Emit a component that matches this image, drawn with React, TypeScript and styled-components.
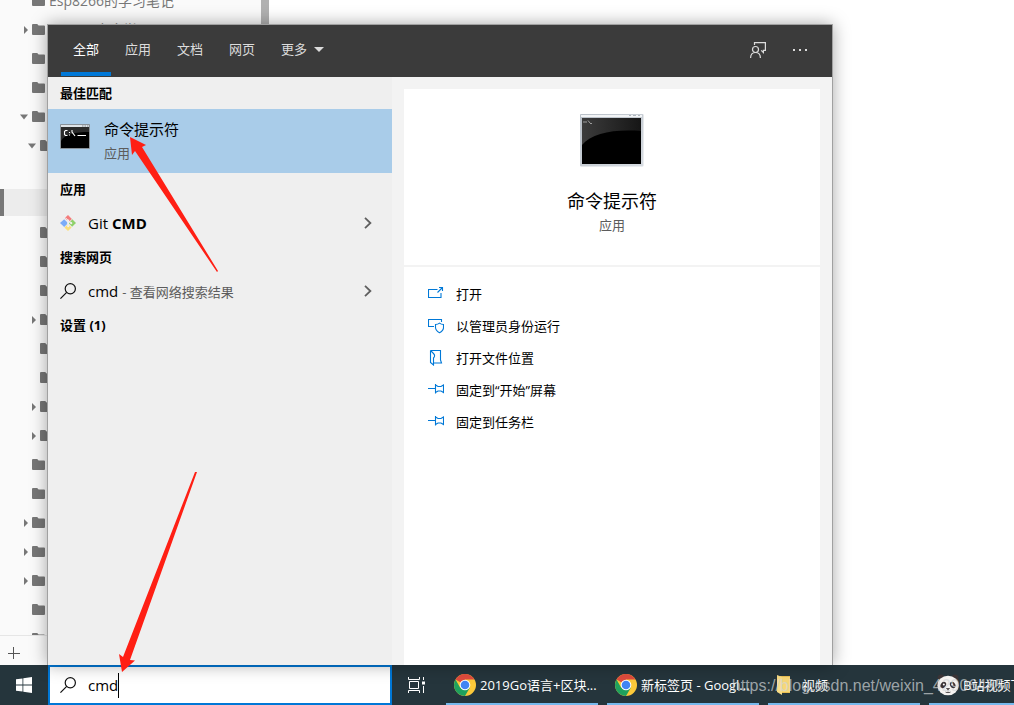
import React from 'react';
import styled, { createGlobalStyle } from 'styled-components';

const GlobalStyle = createGlobalStyle`
  *, *::before, *::after { box-sizing: border-box; }
  html, body { margin: 0; height: 100%; overflow: hidden; }
  #root { height: 100%; }
  body, button, input {
    font-family: "Open Sans", "Noto Sans CJK SC", sans-serif;
  }
  button { border: 0; padding: 0; background: none; color: inherit; text-align: left; }
  svg { display: block; flex: none; }
`;

const Desktop = styled.div`
  position: relative;
  display: flex;
  flex-direction: column;
  height: 100vh;
  overflow: hidden;
  background: #fff;
`;

const Workspace = styled.div`
  flex: 1;
  min-height: 0;
  display: flex;
`;

const Sidebar = styled.aside`
  flex: 0 0 261px;
  display: flex;
  flex-direction: column;
  background: #fafafa;
`;

const Scrollbar = styled.div`
  flex: 0 0 8px;
  background: #b1b1b1;
`;

const Tree = styled.ul`
  flex: 1;
  min-height: 0;
  margin: 0;
  padding: 0;
  list-style: none;
  overflow: hidden;
  display: flex;
  flex-direction: column;
  gap: 2px;

  & > li:first-child { margin-top: -14px; }
`;

const TreeRow = styled.li<{ $level: number; $selected?: boolean }>`
  flex: 0 0 27px;
  display: flex;
  align-items: center;
  gap: 4px;
  padding-top: 2px;
  padding-left: ${p => 12 + p.$level * 8}px;
  color: #777;
  font-size: 14px;
  line-height: 20px;
  white-space: nowrap;
  ${p => p.$selected && 'background: #ececec; border-left: 4px solid #777;'}
`;

const SidebarFooter = styled.div`
  flex: 0 0 30px;
  display: flex;
  align-items: center;
  padding: 4px 0 0 8px;
  border-top: 1px solid #e6e6e6;
`;

const SearchPanel = styled.section`
  position: absolute;
  z-index: 2;
  left: 47px;
  top: 24px;
  bottom: 40px;
  width: 786px;
  display: flex;
  flex-direction: column;
  border: 1px solid #a0a0a0;
  border-bottom: 0;
  box-shadow: 0 0 16px rgba(0, 0, 0, 0.35);
`;

const PanelHeader = styled.header`
  flex: 0 0 52px;
  display: flex;
  justify-content: space-between;
  padding: 0 24px 0 12px;
  background: #3b3b3b;
  color: #dcdcdc;
`;

const Tabs = styled.nav`
  display: flex;
`;

const Tab = styled.button<{ $active?: boolean }>`
  display: flex;
  align-items: center;
  gap: 7px;
  padding: 0 13px 4px;
  font-size: 13px;
  line-height: 20px;
  ${p => p.$active && `
    color: #fff;
    background: linear-gradient(#0078d7, #0078d7) center bottom 1px / 50px 4px no-repeat;
  `}
`;

const HeaderTools = styled.div`
  display: flex;
  align-items: center;
  gap: 26px;
  padding-bottom: 2px;
`;

const PanelBody = styled.div`
  flex: 1;
  min-height: 0;
  display: flex;
`;

const Results = styled.div`
  flex: 0 0 344px;
  background: #efefef;
  color: #000;
`;

const GroupTitle = styled.h2`
  margin: 0;
  padding: 0 12px;
  font-size: 13px;
  font-weight: 700;
  line-height: 32px;
`;

const BestMatch = styled.button`
  width: 100%;
  height: 64px;
  display: flex;
  align-items: center;
  gap: 14px;
  padding: 0 12px;
  background: #a9cce9;
`;

const BestThumb = styled.span`
  padding-bottom: 8px;
`;

const BestText = styled.span`
  display: flex;
  flex-direction: column;
  font-size: 15px;
  line-height: 24px;
`;

const Muted = styled.span`
  color: #5c5c5c;
  font-size: 13px;
`;

const ResultRow = styled.button`
  width: 100%;
  height: 36px;
  display: flex;
  align-items: center;
  gap: 12px;
  padding: 0 20px 0 12px;
  font-size: 15px;
  line-height: 24px;
`;

const ResultLabel = styled.span`
  flex: 1;
`;

const Preview = styled.div`
  flex: 1;
  display: flex;
  flex-direction: column;
  gap: 2px;
  padding: 12px 12px 0;
  background: #f3f3f3;
`;

const Hero = styled.div`
  flex: 0 0 176px;
  display: flex;
  flex-direction: column;
  align-items: center;
  padding-top: 25px;
  background: #fff;
`;

const HeroTitle = styled.h1`
  margin: 20px 0 0;
  font-size: 18px;
  font-weight: 400;
  line-height: 28px;
`;

const Actions = styled.div`
  flex: 1;
  padding: 11px 24px;
  background: #fff;
`;

const Action = styled.button`
  width: 100%;
  height: 32px;
  display: flex;
  align-items: center;
  gap: 12px;
  font-size: 13px;
  line-height: 20px;
  color: #000;
`;

const Taskbar = styled.footer`
  flex: 0 0 40px;
  display: flex;
  background: #25353c;
  color: #fff;
`;

const TaskButton = styled.button`
  flex: 0 0 48px;
  display: flex;
  align-items: center;
  justify-content: center;
`;

const SearchBox = styled.label`
  flex: 0 0 344px;
  display: flex;
  align-items: center;
  padding: 0 10px;
  border: 2px solid #0078d7;
  background: #fff;
`;

const SearchInput = styled.input`
  field-sizing: content;
  margin-left: 12px;
  padding: 0;
  border: 0;
  outline: 0;
  background: none;
  color: #000;
  caret-color: transparent;
  font-size: 15px;
  line-height: 24px;
`;

const Caret = styled.span`
  width: 1px;
  height: 25px;
  background: #000;
`;

const Apps = styled.div`
  flex: 1;
  min-width: 0;
  display: flex;
  gap: 9px;
  padding-left: 6px;
  overflow: hidden;
`;

const AppButton = styled.button`
  flex: 0 0 152px;
  display: flex;
  align-items: center;
  gap: 4px;
  padding: 2px 0 0 8px;
  border-bottom: 2px solid #76b9ed;
  font-size: 13px;
  line-height: 20px;
  white-space: nowrap;
  overflow: hidden;
`;

const Watermark = styled.span`
  position: absolute;
  z-index: 4;
  right: 10px;
  bottom: 8px;
  color: rgba(210, 214, 216, 0.7);
  font-family: "Liberation Sans", Arial, sans-serif;
  font-size: 16px;
  line-height: 22px;
`;

const Pointers = styled.svg`
  position: absolute;
  z-index: 3;
  left: 0;
  top: 0;
  pointer-events: none;
`;

const Twisty = ({ open }: { open?: boolean }) => (
  <svg width="8" height="10" viewBox="0 0 8 10" fill="#777">
    {open ? <path d="M0 2.5h8L4 7.5z" /> : <path d="M4 1l4 4-4 4z" />}
  </svg>
);

const Folder = () => (
  <svg width="13" height="11" viewBox="0 0 13 11" fill="#777">
    <path d="M1 0h4.2l1.4 1.6H12a1 1 0 0 1 1 1V10a1 1 0 0 1-1 1H1a1 1 0 0 1-1-1V1a1 1 0 0 1 1-1z" />
  </svg>
);

const Gap = styled.span`
  flex: 0 0 8px;
`;

const SearchIcon = () => (
  <svg width="16" height="16" viewBox="0 0 16 16" fill="none" stroke="#111" strokeWidth="1.2">
    <circle cx="10.3" cy="5.7" r="5.1" />
    <path d="M6.7 9.3L.4 15.6" />
  </svg>
);

const Chevron = () => (
  <svg width="8" height="12" viewBox="0 0 8 12" fill="none" stroke="#5f5f5f" strokeWidth="1.8">
    <path d="M1 .8L6.4 6 1 11.2" />
  </svg>
);

const GitIcon = () => (
  <svg width="16" height="16" viewBox="0 0 16 16">
    <path d="M8 0l3.9 3.9-3 3L8 6 4.9 3.1z" fill="#f47c7c" />
    <path d="M4.2 4.2L0 8l4.2 4 3-3V7.2z" fill="#7cacf8" />
    <path d="M12.3 4.3L16 8l-3.9 3.8L8.9 8.4z" fill="#8fd16a" />
    <path d="M8 9.2l3.6 3.2L8 16l-3.6-3.6z" fill="#fbdf7b" />
    <path d="M5.4 2.6L8.2 5.4M8.2 5.4v6M8.2 5.4l3 3" stroke="#efefef" strokeWidth="1" />
    <circle cx="8.2" cy="5.6" r="1.1" fill="#efefef" />
    <circle cx="8.2" cy="11.2" r="1.1" fill="#efefef" />
    <circle cx="11.2" cy="8.2" r="1.1" fill="#efefef" />
  </svg>
);

const ConsoleSmall = () => (
  <svg width="30" height="26" viewBox="0 0 30 26">
    <rect width="30" height="25" rx="1" fill="#8a9299" />
    <rect x="1" y="1" width="28" height="2" fill="#dfe4e8" />
    <path d="M22 2h1.5M24.5 2H26M27 2h1.5" stroke="#7f868c" />
    <rect x="1" y="3" width="28" height="21" fill="#000" />
    <path d="M1 3h28v5C15 8 5 10 1 17z" fill="#2b2b2b" />
    <path d="M7.5 6.500H5.500l-1 1v3l1 1h2M9.500 8v1M9.500 10.500v1M12 6v2l3 4M17.500 11.500H26" fill="none" stroke="#fff" strokeWidth="1.1" />
  </svg>
);

const ConsoleLarge = () => (
  <svg width="64" height="53" viewBox="0 0 64 53">
    <defs>
      <linearGradient id="frame" x1="0" y1="0" x2="1" y2="1">
        <stop offset="0" stopColor="#b9c0c8" />
        <stop offset="1" stopColor="#d7dce2" />
      </linearGradient>
      <linearGradient id="gloss" x1="0" y1="0" x2="1" y2="0">
        <stop offset="0" stopColor="#3c3c3c" />
        <stop offset="1" stopColor="#161616" />
      </linearGradient>
    </defs>
    <rect width="63.500" height="52.500" rx="1" fill="url(#frame)" />
    <rect x="1" y="1" width="61" height="2" fill="#f2f4f6" />
    <path d="M49 1.500h2M53 1.500h3M58 1.500h2" stroke="#aeb5bc" />
    <rect x="2" y="4" width="59" height="46" fill="#000" />
    <path d="M2 4h59v13C34 15 12 19 2 31z" fill="url(#gloss)" />
    <path d="M3 8h2M6 7v2M8 6.500l2 2.500M10 9.500h2" stroke="#a8a8a8" strokeWidth=".9" />
  </svg>
);

const actionIcon = {
  width: 16, height: 16, viewBox: '0 0 16 16', fill: 'none', stroke: '#0078d7', strokeWidth: 1.1,
};

const OpenIcon = () => (
  <svg {...actionIcon}>
    <path d="M9.500 3.500h-9v8h12.500V7M9.500 6.500l5-5M11 1.500h3.500V5" />
  </svg>
);

const AdminIcon = () => (
  <svg {...actionIcon}>
    <path d="M6 8.500H.500v-7h13v2.500" />
    <path d="M11.500 5.200c1.200 1 2.500 1.300 4 1.300v3c0 2.200-1.800 4-4 5.200-2.200-1.200-4-3-4-5.200v-3c1.500 0 2.800-.3 4-1.300z" />
  </svg>
);

const LocationIcon = () => (
  <svg {...actionIcon}>
    <path d="M2.500 .500h10v9.500l1 3H6M2.500.500v12l3 2.500V8c1.500-1.500 1.500-3 0-4.500L2.500.500" />
  </svg>
);

const PinIcon = () => (
  <svg {...actionIcon}>
    <path d="M0 6.500h7.500M7.500 2v9.500M7.500 3l2.500 1.500h3l2.500-1.500v7.500l-2.500-1.500h-3l-2.500 1.500" />
  </svg>
);

const FeedbackIcon = () => (
  <svg width="16" height="16" viewBox="0 0 16 16" fill="none" stroke="#dcdcdc" strokeWidth="1.200">
    <path d="M4.500 3V.600h10.900v7.800h-2v2.200l-2.200-2.200" />
    <circle cx="5.500" cy="7.500" r="3" />
    <path d="M.600 16c0-3.600 2-5.500 4.900-5.500s4.900 1.900 4.900 5.500" />
  </svg>
);

const ChromeIcon = () => (
  <svg width="22" height="22" viewBox="0 0 22 22">
    <circle cx="11" cy="11" r="11" fill="#fbc93a" />
    <path d="M11 11L1.500 5.500A11 11 0 0 1 20.500 5.500H11z" fill="#df4b3d" />
    <path d="M1.500 5.500A11 11 0 0 0 11 22l4.800-8.300L11 11 6.200 13.700z" fill="#1fa15d" />
    <circle cx="11" cy="11" r="5.300" fill="#fff" />
    <circle cx="11" cy="11" r="4.300" fill="#4285f4" />
  </svg>
);

const FolderIcon = () => (
  <svg width="22" height="22" viewBox="0 0 22 22">
    <path d="M4 2h10v17H4z" fill="#e9bf53" />
    <path d="M1 1l5 2v18l-5-3z" fill="#f8dc85" />
    <path d="M6 3h8v15H6z" fill="#f7d778" />
  </svg>
);

const PandaIcon = () => (
  <svg width="22" height="22" viewBox="0 0 22 22">
    <circle cx="4" cy="4" r="3.500" fill="#3a3335" />
    <circle cx="18" cy="4" r="3.500" fill="#3a3335" />
    <ellipse cx="11" cy="11.500" rx="10.600" ry="9.800" fill="#f4f2f0" />
    <ellipse cx="6.300" cy="11" rx="2.600" ry="3.400" fill="#3a3335" transform="rotate(30 6.300 11)" />
    <ellipse cx="15.700" cy="11" rx="2.600" ry="3.400" fill="#3a3335" transform="rotate(-30 15.700 11)" />
    <circle cx="6.800" cy="10.500" r="1" fill="#fff" />
    <circle cx="15.200" cy="10.500" r="1" fill="#fff" />
    <path d="M9.500 14.500h3l-1.500 1.500zM11 16v1.500M8.500 18c1 .8 4 .8 5 0" fill="#3a3335" stroke="#3a3335" strokeWidth=".7" />
  </svg>
);

type Node = { level: number; folder?: boolean; state?: 'open' | 'closed'; label?: string; selected?: boolean };

const tree: Node[] = [
  { level: 1, folder: true, label: 'Esp8266的学习笔记' },
  { level: 1, folder: true, state: 'closed', label: 'GitHub命令学习' },
  { level: 1, folder: true },
  { level: 1, folder: true },
  { level: 1, folder: true, state: 'open' },
  { level: 2, folder: true, state: 'open' },
  { level: 3 },
  { level: 3, selected: true },
  { level: 2, folder: true },
  { level: 2, folder: true },
  { level: 2, folder: true },
  { level: 2, folder: true, state: 'closed' },
  { level: 2, folder: true },
  { level: 2, folder: true },
  { level: 2, folder: true, state: 'closed' },
  { level: 2, folder: true, state: 'closed' },
  { level: 1, folder: true },
  { level: 1, folder: true },
  { level: 1, folder: true, state: 'closed' },
  { level: 1, folder: true, state: 'closed' },
  { level: 1, folder: true, state: 'closed' },
  { level: 1, folder: true },
  { level: 1, folder: true },
];

const actions = [
  { icon: <OpenIcon />, label: '打开' },
  { icon: <AdminIcon />, label: '以管理员身份运行' },
  { icon: <LocationIcon />, label: '打开文件位置' },
  { icon: <PinIcon />, label: '固定到“开始”屏幕' },
  { icon: <PinIcon />, label: '固定到任务栏' },
];

const apps = [
  { icon: <ChromeIcon />, label: '2019Go语言+区块...' },
  { icon: <ChromeIcon />, label: '新标签页 - Googl...' },
  { icon: <FolderIcon />, label: '视频' },
  { icon: <PandaIcon />, label: 'B站视频下载' },
];

export default function App() {
  return (
    <Desktop>
      <GlobalStyle />
      <Workspace>
        <Sidebar>
          <Tree>
            {tree.map((n, i) => (
              <TreeRow key={i} $level={n.level} $selected={n.selected}>
                {n.state ? <Twisty open={n.state === 'open'} /> : <Gap />}
                {n.folder && <Folder />}
                {n.label}
              </TreeRow>
            ))}
          </Tree>
          <SidebarFooter>
            <button aria-label="新建">
              <svg width="12" height="12" viewBox="0 0 12 12" stroke="#555">
                <path d="M0 6.500h12M5.500 0v12" />
              </svg>
            </button>
          </SidebarFooter>
        </Sidebar>
        <Scrollbar />
      </Workspace>

      <SearchPanel>
        <PanelHeader>
          <Tabs>
            <Tab $active>全部</Tab>
            <Tab>应用</Tab>
            <Tab>文档</Tab>
            <Tab>网页</Tab>
            <Tab>
              更多
              <svg width="10" height="5" viewBox="0 0 10 5" fill="#dcdcdc"><path d="M0 0h10L5 5z" /></svg>
            </Tab>
          </Tabs>
          <HeaderTools>
            <button aria-label="反馈"><FeedbackIcon /></button>
            <button aria-label="选项">
              <svg width="16" height="2" viewBox="0 0 16 2" fill="#dcdcdc">
                <path d="M1 0h2v2H1zM7 0h2v2H7zM13 0h2v2h-2z" />
              </svg>
            </button>
          </HeaderTools>
        </PanelHeader>
        <PanelBody>
          <Results>
            <GroupTitle>最佳匹配</GroupTitle>
            <BestMatch>
              <BestThumb><ConsoleSmall /></BestThumb>
              <BestText>
                命令提示符
                <Muted>应用</Muted>
              </BestText>
            </BestMatch>
            <GroupTitle>应用</GroupTitle>
            <ResultRow>
              <GitIcon />
              <ResultLabel>Git <b>CMD</b></ResultLabel>
              <Chevron />
            </ResultRow>
            <GroupTitle>搜索网页</GroupTitle>
            <ResultRow>
              <SearchIcon />
              <ResultLabel>cmd <Muted>- 查看网络搜索结果</Muted></ResultLabel>
              <Chevron />
            </ResultRow>
            <GroupTitle>设置 (1)</GroupTitle>
          </Results>
          <Preview>
            <Hero>
              <ConsoleLarge />
              <HeroTitle>命令提示符</HeroTitle>
              <Muted>应用</Muted>
            </Hero>
            <Actions>
              {actions.map(a => (
                <Action key={a.label}>{a.icon}{a.label}</Action>
              ))}
            </Actions>
          </Preview>
        </PanelBody>
      </SearchPanel>

      <Taskbar>
        <TaskButton aria-label="开始">
          <svg width="16" height="16" viewBox="0 0 16 16" fill="#fff">
            <path d="M0 2.300l6.500-.9v6.100H0zM7.300 1.300L16 0v7.500H7.300zM0 8.400h6.500v6.200L0 13.700zM7.300 8.400H16V16l-8.700-1.300z" />
          </svg>
        </TaskButton>
        <SearchBox>
          <SearchIcon />
          <SearchInput aria-label="搜索" defaultValue="cmd" />
          <Caret />
        </SearchBox>
        <TaskButton aria-label="任务视图">
          <svg width="17" height="16" viewBox="0 0 17 16" fill="none" stroke="#fff">
            <path d="M.500 0v2.500h11V0M.500 16v-2.500h11V16M1.500 4.500h9v7h-9zM15.500 0v3M15.500 9v7" />
            <path d="M14 4.500h3v3h-3z" fill="#fff" stroke="none" />
          </svg>
        </TaskButton>
        <Apps>
          {apps.map(a => (
            <AppButton key={a.label}>{a.icon}{a.label}</AppButton>
          ))}
        </Apps>
      </Taskbar>

      <Pointers width="240" height="680" viewBox="0 0 240 680" fill="#ff1f14" aria-hidden="true">
        <path d="M130 137l16 8-4 2 76 124-1 1-82-121-3 4z" />
        <path d="M122 672l-3-18 4 3 72-185h2l-67 188 5 .500z" />
      </Pointers>
      <Watermark>https://blog.csdn.net/weixin_42906485</Watermark>
    </Desktop>
  );
}
